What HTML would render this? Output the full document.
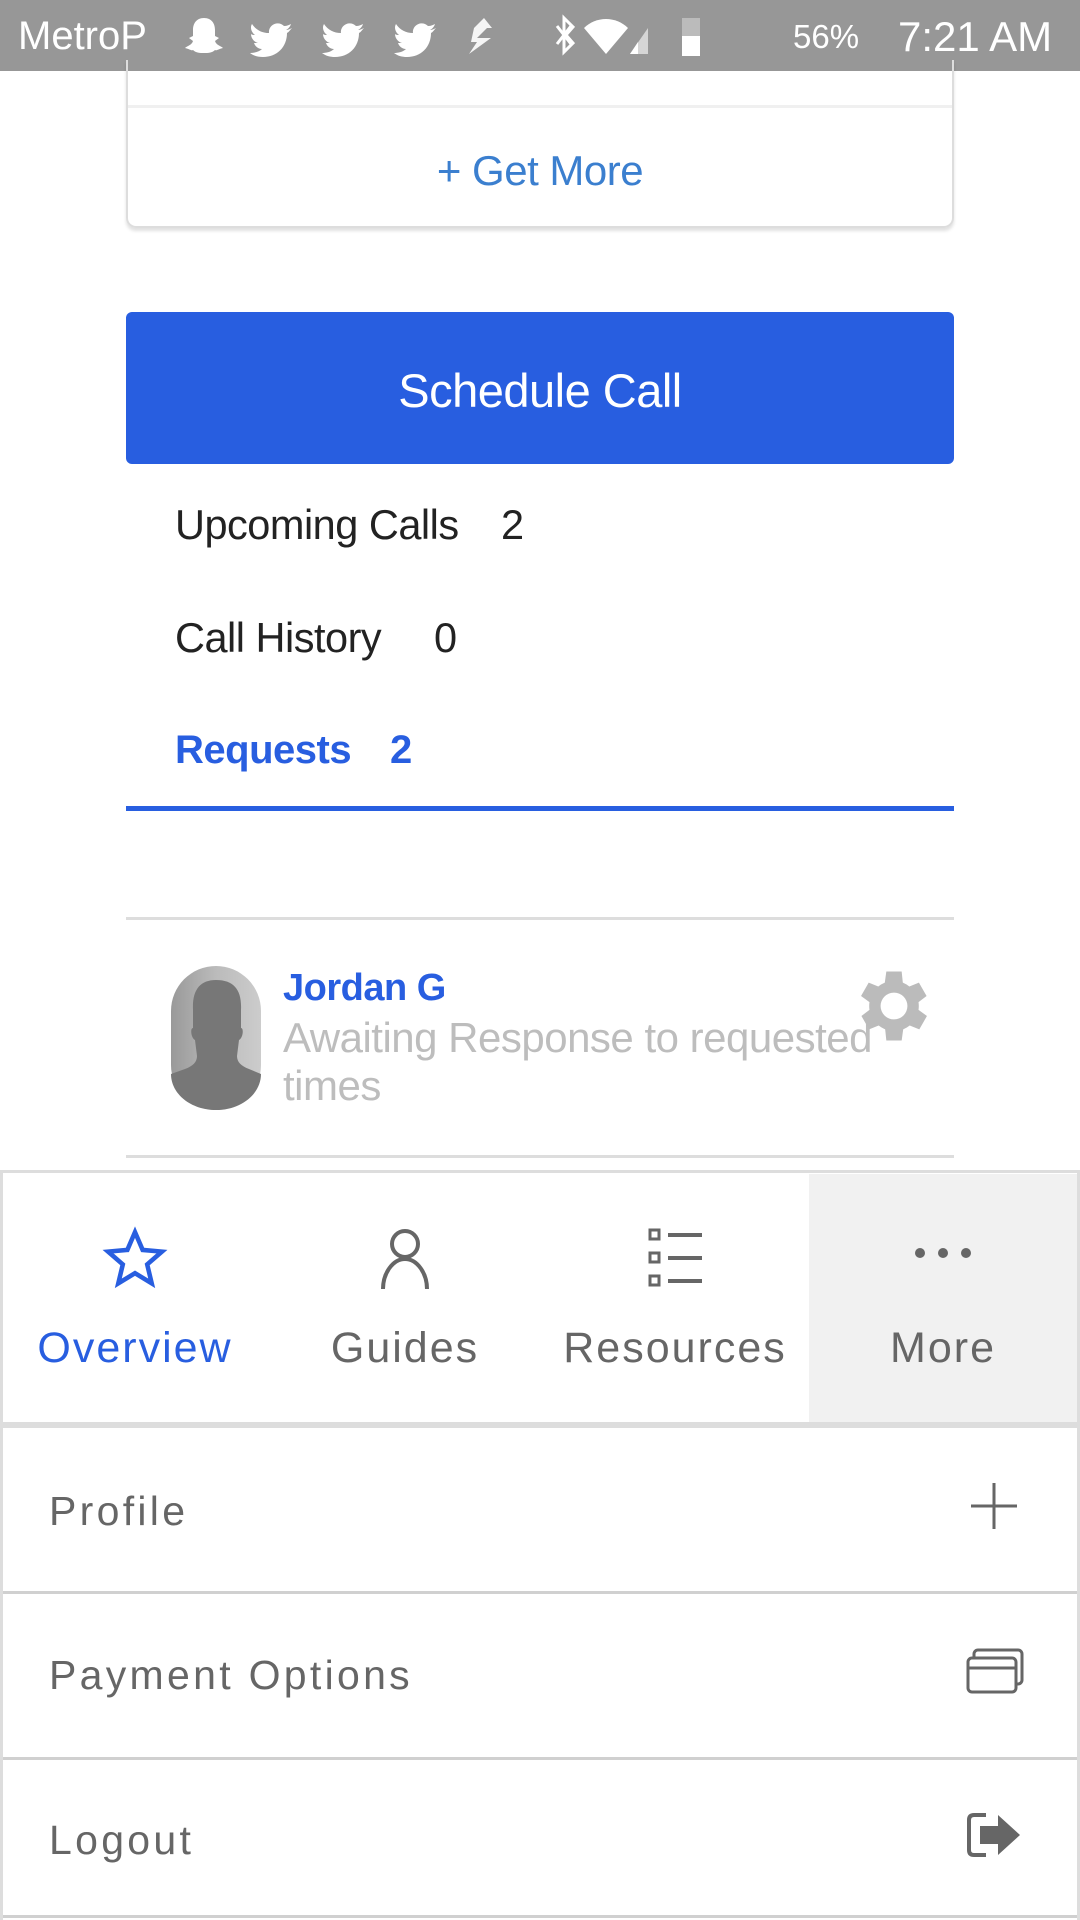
<!DOCTYPE html>
<html><head><meta charset="utf-8">
<style>
*{box-sizing:border-box;margin:0;padding:0}
body{width:1080px;height:1920px;background:#fff;font-family:"Liberation Sans",sans-serif;position:relative;overflow:hidden}
.abs{position:absolute}
.sb{left:0;top:0;width:1080px;height:71px;background:#979797;color:#fff;font-size:38px}
.card{left:126px;top:60px;width:828px;height:168px;border:2px solid #ddd;border-top:none;border-radius:0 0 10px 10px;box-shadow:0 3px 3px rgba(0,0,0,.12)}
.btn{left:126px;top:312px;width:828px;height:152px;background:#285ee0;border-radius:6px;color:#fff;font-size:47px;text-align:center;line-height:158px;letter-spacing:-0.5px}
.row{left:175px;font-size:41.5px;color:#222;letter-spacing:-0.5px}
.tab{top:1174px;height:250px;text-align:center;font-size:43px;color:#666;letter-spacing:2px}
.menu{left:3px;width:1074px;border-bottom:3px solid #d0d0d0;font-size:41px;color:#666;letter-spacing:3.3px}
</style></head><body>
<div class="abs sb">
 <span class="abs" style="left:18px;top:14px;font-size:40px">MetroP</span>
 <svg class="abs" style="left:184px;top:14px" width="540" height="44" viewBox="0 0 540 44" fill="#fff">
  <path d="M20 4c8 0 11 6 11 12v6l4 2-4 3c1 4 6 5 8 7-5 1-6 3-8 2-3 3-7 3-11 3s-8 0-11-3c-2 1-3-1-8-2 2-2 7-3 8-7l-4-3 4-2v-6C9 10 12 4 20 4z"/>
  <path d="M68 10c4 6 10 9 17 9-1-8 9-13 15-7 3 0 5-1 7-2-1 3-3 5-5 6 2 0 4-1 6-2-2 2-3 4-5 5 0 14-10 24-24 24-5 0-9-1-13-4 4 0 9-1 12-4-4 0-7-3-8-6h4c-4-1-7-5-7-9 1 1 3 1 4 1-4-3-5-8-3-11z"/>
  <path d="M140 10c4 6 10 9 17 9-1-8 9-13 15-7 3 0 5-1 7-2-1 3-3 5-5 6 2 0 4-1 6-2-2 2-3 4-5 5 0 14-10 24-24 24-5 0-9-1-13-4 4 0 9-1 12-4-4 0-7-3-8-6h4c-4-1-7-5-7-9 1 1 3 1 4 1-4-3-5-8-3-11z"/>
  <path d="M212 10c4 6 10 9 17 9-1-8 9-13 15-7 3 0 5-1 7-2-1 3-3 5-5 6 2 0 4-1 6-2-2 2-3 4-5 5 0 14-10 24-24 24-5 0-9-1-13-4 4 0 9-1 12-4-4 0-7-3-8-6h4c-4-1-7-5-7-9 1 1 3 1 4 1-4-3-5-8-3-11z"/>
  <path d="M290 14l10-10 8 10h-5l-10 10h14l-22 16 8-12h-6z" opacity=".9"/>
  <path d="M380 4l9 9-7 8 7 8-9 9V4zM373 12l14 18M373 30l14-18" stroke="#fff" stroke-width="3" fill="none"/>
  <path d="M400 14c12-12 32-12 44 0l-22 26z"/>
  <path d="M446 40l18-26v26z" opacity=".6"/><path d="M446 40l8-12v12z"/>
  <rect x="498" y="4" width="18" height="38" fill="#bbb"/><rect x="498" y="22" width="18" height="20"/>
 </svg>
 <span class="abs" style="left:793px;top:18px;font-size:33px">56%</span>
 <span class="abs" style="left:898px;top:13px;font-size:42px">7:21 AM</span>
</div>
<div class="abs card">
 <div class="abs" style="left:0;top:45px;width:824px;height:3px;background:#f0f0f0"></div>
 <div class="abs" style="left:0;top:87px;width:824px;text-align:center;font-size:42px;color:#3b7fcf;letter-spacing:-0.5px">+ Get More</div>
</div>
<div class="abs btn">Schedule Call</div>
<div class="abs row" style="top:501px">Upcoming Calls</div><div class="abs row" style="top:501px;left:501px">2</div>
<div class="abs row" style="top:614px">Call History</div><div class="abs row" style="top:614px;left:434px">0</div>
<div class="abs row" style="top:728px;color:#285ee0;font-weight:bold;font-size:40px">Requests</div><div class="abs row" style="top:728px;left:390px;color:#285ee0;font-weight:bold;font-size:40px">2</div>
<div class="abs" style="left:126px;top:806px;width:828px;height:5px;background:#285ee0"></div>
<div class="abs" style="left:126px;top:917px;width:828px;height:3px;background:#ddd"></div>
<svg class="abs" style="left:171px;top:966px" width="90" height="144" viewBox="0 0 90 144">
 <defs><linearGradient id="g" x1="0" x2="1"><stop offset="0" stop-color="#999"/><stop offset=".5" stop-color="#bbb"/><stop offset="1" stop-color="#ccc"/></linearGradient></defs>
 <rect width="90" height="144" rx="45" fill="url(#g)"/>
 <path d="M45 14c-16 0-24 10-23 30v18c-3 0-2 10 2 12l2 16c0 6-4 10-12 13L0 108v-0c0 20 20 36 45 36s45-16 45-36l-12-5c-8-3-12-7-12-13l2-16c4-2 5-12 2-12V44c1-20-7-30-25-30z" fill="#777"/>
</svg>
<div class="abs" style="left:283px;top:967px;font-size:38px;font-weight:bold;color:#285ee0;letter-spacing:-0.5px">Jordan G</div>
<div class="abs" style="left:283px;top:1014px;width:680px;font-size:42px;line-height:48px;color:#bdbdbd;letter-spacing:-0.5px">Awaiting Response to requested<br>times</div>
<svg class="abs" style="left:848px;top:960px" width="92" height="92" viewBox="0 0 24 24"><path fill="#bbb" d="M19.4 13a7.5 7.5 0 000-2l2.1-1.6-2-3.5-2.5 1a7 7 0 00-1.7-1L15 3h-4l-.4 2.9a7 7 0 00-1.7 1l-2.5-1-2 3.5L6.6 11a7.5 7.5 0 000 2l-2.1 1.6 2 3.5 2.5-1a7 7 0 001.7 1L11 21h4l.4-2.9a7 7 0 001.7-1l2.5 1 2-3.5zM13 15.5a3.5 3.5 0 110-7 3.5 3.5 0 010 7z" transform="translate(-1 0)"/></svg>
<div class="abs" style="left:126px;top:1155px;width:828px;height:3px;background:#ddd"></div>
<div class="abs" style="left:0;top:1170px;width:1080px;height:258px;border:3px solid #ddd;border-bottom-width:6px;background:#fff"></div>
<div class="abs" style="left:809px;top:1174px;width:268px;height:248px;background:#f1f1f1"></div>
<div class="abs tab" style="left:0;width:270px;color:#285ee0">
 <svg style="margin-top:51px" width="68" height="68" viewBox="0 0 24 24"><path d="M12 2.5l2.7 6.3 6.8.6-5.2 4.5 1.6 6.7L12 17l-5.9 3.6 1.6-6.7-5.2-4.5 6.8-.6z" fill="none" stroke="#285ee0" stroke-width="1.6"/></svg>
 <div style="margin-top:20px">Overview</div></div>
<div class="abs tab" style="left:270px;width:270px">
 <svg style="margin-top:53px" width="50" height="62" viewBox="0 0 50 62"><circle cx="25" cy="17" r="13" fill="none" stroke="#666" stroke-width="4"/><path d="M3 62c0-16 10-30 22-30s22 14 22 30" fill="none" stroke="#666" stroke-width="4"/></svg>
 <div style="margin-top:24px">Guides</div></div>
<div class="abs tab" style="left:540px;width:270px">
 <svg style="margin-top:53px" width="54" height="60" viewBox="0 0 54 60"><g fill="none" stroke="#666" stroke-width="3"><rect x="2" y="3" width="9" height="9"/><rect x="2" y="26" width="9" height="9"/><rect x="2" y="49" width="9" height="9"/></g><g fill="#666"><rect x="20" y="6" width="34" height="4"/><rect x="20" y="29" width="34" height="4"/><rect x="20" y="52" width="34" height="4"/></g></svg>
 <div style="margin-top:26px">Resources</div></div>
<div class="abs tab" style="left:809px;width:268px">
 <svg style="margin-top:72px" width="60" height="14" viewBox="0 0 60 14"><circle cx="7" cy="7" r="5" fill="#666"/><circle cx="30" cy="7" r="5" fill="#666"/><circle cx="53" cy="7" r="5" fill="#666"/></svg>
 <div style="margin-top:53px">More</div></div>
<div class="abs" style="left:0;top:1428px;width:3px;height:492px;background:#ddd"></div>
<div class="abs" style="left:1077px;top:1428px;width:3px;height:492px;background:#ddd"></div>
<div class="abs menu" style="top:1428px;height:166px"><span class="abs" style="left:46px;top:60px">Profile</span>
 <svg class="abs" style="left:968px;top:55px" width="46" height="46"><path d="M23 0v46M0 23h46" stroke="#666" stroke-width="3"/></svg></div>
<div class="abs menu" style="top:1594px;height:166px"><span class="abs" style="left:46px;top:58px">Payment Options</span>
 <svg class="abs" style="left:963px;top:54px" width="58" height="46" viewBox="0 0 58 46"><g fill="none" stroke="#666" stroke-width="3"><rect x="8" y="2" width="48" height="34" rx="4"/><rect x="2" y="10" width="48" height="34" rx="4" fill="#fff"/><path d="M2 20h48"/></g></svg></div>
<div class="abs menu" style="top:1760px;height:158px"><span class="abs" style="left:46px;top:57px">Logout</span>
 <svg class="abs" style="left:963px;top:52px" width="58" height="46" viewBox="0 0 58 46"><path d="M20 3H8Q3 3 3 8v30q0 5 5 5h12" fill="none" stroke="#666" stroke-width="4"/><path d="M14 14h18V3l22 20-22 20V32H14z" fill="#666"/></svg></div>
</body></html>
